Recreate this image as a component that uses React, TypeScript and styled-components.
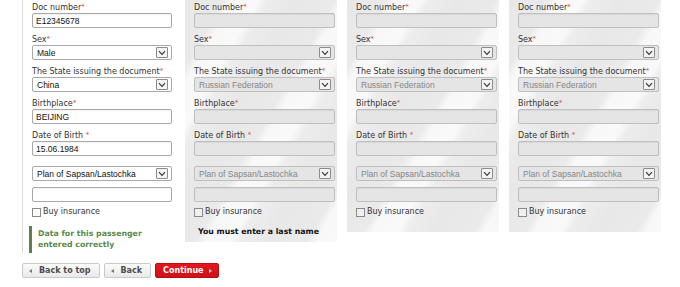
import React from "react";
import styled, { createGlobalStyle } from "styled-components";

const GlobalStyle = createGlobalStyle`
  html, body { margin: 0; padding: 0; background: #ffffff; }
  body { font-family: "DejaVu Sans", Verdana, sans-serif; }
`;

const Page = styled.div`
  padding-left: 22px;
  width: 680px;
  height: 287px;
  box-sizing: border-box;
  overflow: hidden;
`;

const Columns = styled.div`
  display: flex;
  align-items: flex-start;
  gap: 10px;
`;

const Column = styled.div<{ $panel: boolean; $pb: number }>`
  box-sizing: border-box;
  width: ${(p) => (p.$panel ? 152 : 153)}px;
  padding: 0 ${(p) => (p.$panel ? 2 : 3)}px ${(p) => p.$pb}px 9px;
  border-left: ${(p) => (p.$panel ? "none" : "1px solid #dcdcdc")};
  display: flex;
  flex-direction: column;
  background: ${(p) =>
    p.$panel
      ? "repeating-linear-gradient(120deg, #e8e8e8 0px, #eaeaea 34px, #f8f8f8 42px, #f9f9f9 64px, #ededed 72px, #e8e8e8 96px)"
      : "transparent"};
`;

const Field = styled.div<{ $gap: number }>`
  display: flex;
  flex-direction: column;
  margin-top: ${(p) => p.$gap}px;
`;

const Label = styled.div`
  font-family: "DejaVu Sans", Verdana, sans-serif;
  font-size: 8px;
  line-height: 10px;
  padding-top: 3px;
  color: #333333;
  white-space: nowrap;
`;

const Req = styled.span`
  color: #e2463c;
  font-size: 7px;
  vertical-align: top;
  line-height: 8px;
`;

const TextInput = styled.input<{ $off: boolean }>`
  box-sizing: border-box;
  display: block;
  width: 100%;
  height: 15px;
  margin: 0;
  padding: 0 3px;
  border: 1px solid ${(p) => (p.$off ? "#bfbfbf" : "#a9a9a9")};
  border-radius: 2px;
  background: ${(p) => (p.$off ? "#e5e5e5" : "#ffffff")};
  box-shadow: inset 0 1px 1px rgba(0, 0, 0, 0.06);
  font-family: "Liberation Sans", Arial, sans-serif;
  font-size: 8.5px;
  color: #111;
  outline: none;
`;

const SelectBox = styled.div<{ $off: boolean }>`
  box-sizing: border-box;
  width: 100%;
  height: 15px;
  display: flex;
  align-items: center;
  justify-content: space-between;
  padding: 0 3px 0 3px;
  border: 1px solid ${(p) => (p.$off ? "#bfbfbf" : "#a9a9a9")};
  border-radius: 2px;
  background: ${(p) => (p.$off ? "#e5e5e5" : "#ffffff")};
  font-family: "Liberation Sans", Arial, sans-serif;
  font-size: 8.5px;
  color: ${(p) => (p.$off ? "#868686" : "#111")};
  white-space: nowrap;
`;

const SelectText = styled.span`
  padding-left: 1px;
`;

const ArrowBox = styled.span`
  box-sizing: border-box;
  width: 12px;
  height: 11px;
  border: 1px solid #8c8c8c;
  border-radius: 1px;
  background: #f4f4f4;
  display: flex;
  align-items: center;
  justify-content: center;
  flex: none;
`;

const CheckRow = styled.div`
  display: flex;
  align-items: center;
  height: 12px;
  margin-top: 4px;
`;

const CheckBox = styled.span<{ $off: boolean }>`
  box-sizing: border-box;
  width: 9px;
  height: 9px;
  border: 1px solid #8a8a8a;
  background: ${(p) => (p.$off ? "#f0f0f0" : "#ffffff")};
  flex: none;
`;

const CheckLabel = styled.span`
  font-family: "DejaVu Sans", Verdana, sans-serif;
  font-size: 8px;
  color: #333;
  margin-left: 2px;
  line-height: 12px;
`;

const Success = styled.div`
  margin-top: 8px;
  margin-left: -3px;
  border-left: 3px solid #5f7f53;
  padding: 3px 0 3px 6px;
  font-family: "DejaVu Sans", Verdana, sans-serif;
  font-weight: bold;
  font-size: 7.8px;
  line-height: 10.5px;
  color: #5b8a4b;
`;

const ErrorText = styled.div`
  margin-top: 8px;
  padding-left: 4px;
  font-family: "DejaVu Sans", Verdana, sans-serif;
  font-weight: bold;
  font-size: 7.8px;
  line-height: 12px;
  color: #111;
  white-space: nowrap;
`;

const Buttons = styled.div`
  display: flex;
  gap: 4px;
  margin-top: 10px;
`;

const Button = styled.button<{ $primary?: boolean }>`
  box-sizing: border-box;
  height: 15px;
  display: flex;
  align-items: center;
  margin: 0;
  padding: ${(p) => (p.$primary ? "0 6px 0 7px" : "0 8px 0 6px")};
  border: 1px solid ${(p) => (p.$primary ? "#b30f15" : "#cacaca")};
  border-radius: 2px;
  background: ${(p) =>
    p.$primary
      ? "linear-gradient(#e3161e, #cf1118)"
      : "linear-gradient(#fbfbfb, #e9e9e9)"};
  color: ${(p) => (p.$primary ? "#ffffff" : "#4d4d4d")};
  font-family: "DejaVu Sans", Verdana, sans-serif;
  font-weight: bold;
  font-size: 8px;
  white-space: nowrap;
  cursor: pointer;
`;

const Tri = styled.span<{ $dir: "left" | "right"; $color: string }>`
  width: 0;
  height: 0;
  border-top: 2.5px solid transparent;
  border-bottom: 2.5px solid transparent;
  ${(p) =>
    p.$dir === "left"
      ? `border-right: 3px solid ${p.$color}; margin-right: 7px;`
      : `border-left: 3px solid ${p.$color}; margin-left: 5px;`}
`;

const Chevron = () => (
  <svg width="8" height="6" viewBox="0 0 8 6">
    <path d="M1 1.2 L4 4.4 L7 1.2" fill="none" stroke="#333" strokeWidth="1.1" />
  </svg>
);

type Passenger = {
  active: boolean;
  doc: string;
  sex: string;
  state: string;
  birthplace: string;
  dob: string;
  plan: string;
  footer: "success" | "error" | "none";
};

const passengers: Passenger[] = [
  {
    active: true,
    doc: "E12345678",
    sex: "Male",
    state: "China",
    birthplace: "BEIJING",
    dob: "15.06.1984",
    plan: "Plan of Sapsan/Lastochka",
    footer: "success",
  },
  {
    active: false,
    doc: "",
    sex: "",
    state: "Russian Federation",
    birthplace: "",
    dob: "",
    plan: "Plan of Sapsan/Lastochka",
    footer: "error",
  },
  {
    active: false,
    doc: "",
    sex: "",
    state: "Russian Federation",
    birthplace: "",
    dob: "",
    plan: "Plan of Sapsan/Lastochka",
    footer: "none",
  },
  {
    active: false,
    doc: "",
    sex: "",
    state: "Russian Federation",
    birthplace: "",
    dob: "",
    plan: "Plan of Sapsan/Lastochka",
    footer: "none",
  },
];

const Select = ({ value, off }: { value: string; off: boolean }) => (
  <SelectBox $off={off}>
    <SelectText>{value}</SelectText>
    <ArrowBox>
      <Chevron />
    </ArrowBox>
  </SelectBox>
);

const PassengerColumn = ({ p }: { p: Passenger }) => {
  const off = !p.active;
  const pb = p.footer === "success" ? 0 : p.footer === "error" ? 4 : 14;
  return (
    <Column $panel={off} $pb={pb}>
      <Field $gap={0}>
        <Label>
          Doc number<Req>*</Req>
        </Label>
        <TextInput $off={off} value={p.doc} readOnly disabled={off} />
      </Field>
      <Field $gap={4}>
        <Label>
          Sex<Req>*</Req>
        </Label>
        <Select value={p.sex} off={off} />
      </Field>
      <Field $gap={4}>
        <Label>
          The State issuing the document<Req>*</Req>
        </Label>
        <Select value={p.state} off={off} />
      </Field>
      <Field $gap={4}>
        <Label>
          Birthplace<Req>*</Req>
        </Label>
        <TextInput $off={off} value={p.birthplace} readOnly disabled={off} />
      </Field>
      <Field $gap={4}>
        <Label>
          Date of Birth <Req>*</Req>
        </Label>
        <TextInput $off={off} value={p.dob} readOnly disabled={off} />
      </Field>
      <Field $gap={10}>
        <Select value={p.plan} off={off} />
      </Field>
      <Field $gap={6}>
        <TextInput $off={off} value="" readOnly disabled={off} />
      </Field>
      <CheckRow>
        <CheckBox $off={off} />
        <CheckLabel>Buy insurance</CheckLabel>
      </CheckRow>
      {p.footer === "success" && (
        <Success>
          Data for this passenger
          <br />
          entered correctly
        </Success>
      )}
      {p.footer === "error" && <ErrorText>You must enter a last name</ErrorText>}
    </Column>
  );
};

export default function App() {
  return (
    <>
      <GlobalStyle />
      <Page>
        <Columns>
          {passengers.map((p, i) => (
            <PassengerColumn key={i} p={p} />
          ))}
        </Columns>
        <Buttons>
          <Button>
            <Tri $dir="left" $color="#7a7a7a" />
            Back to top
          </Button>
          <Button>
            <Tri $dir="left" $color="#7a7a7a" />
            Back
          </Button>
          <Button $primary>
            Continue
            <Tri $dir="right" $color="#ffd0d0" />
          </Button>
        </Buttons>
      </Page>
    </>
  );
}
